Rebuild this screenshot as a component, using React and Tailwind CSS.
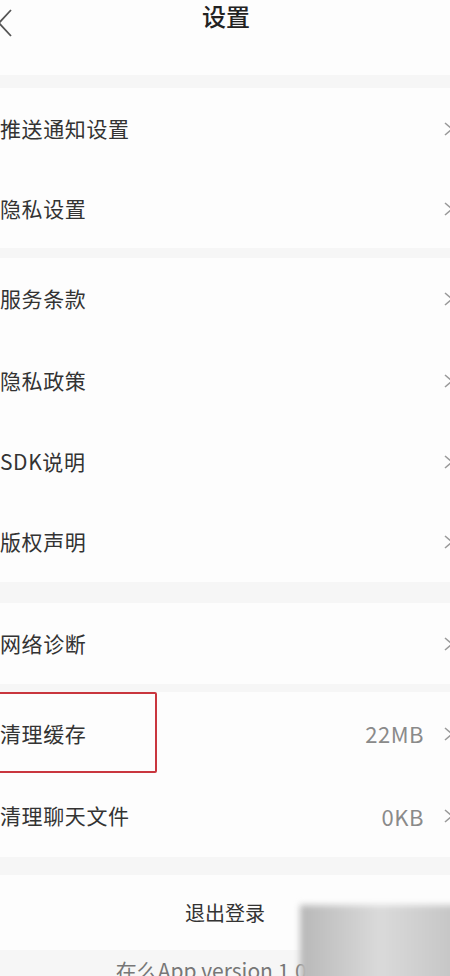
import React from 'react';

const font = { fontFamily: '"Noto Sans CJK SC", "Noto Sans", sans-serif' };

function Chevron() {
  return (
    <svg width="14" height="18" viewBox="0 0 14 18" className="shrink-0 -mr-[6px]">
      <polyline points="3,3 10,9 3,15" fill="none" stroke="#9a9a9a" strokeWidth="1.6" />
    </svg>
  );
}

function Row({ label, value, height = 'h-[81px]', highlight }) {
  return (
    <div className={`relative flex items-center justify-between bg-[#fdfdfd] ${height}`}>
      <span className="text-[21px] text-[#333] tracking-[0.6px]">{label}</span>
      <div className="flex items-center gap-[18px]">
        {value && <span className="text-[22px] text-[#8a8a8a] tracking-[0.5px]">{value}</span>}
        <Chevron />
      </div>
      {highlight && (
        <div className="absolute left-[-4px] top-0 w-[161px] h-[81px] border-2 border-[#c9363e] rounded-[2px]" />
      )}
    </div>
  );
}

export default function App() {
  return (
    <div className="relative w-[450px] h-[976px] overflow-hidden bg-[#f6f6f6]" style={font}>
      {/* header */}
      <div className="relative h-[75px] bg-[#fdfdfd]">
        <svg width="14" height="28" viewBox="0 0 14 28" className="absolute left-[-2px] top-[9px]">
          <polyline points="13,1 1,14 13,27" fill="none" stroke="#555" strokeWidth="1.8" />
        </svg>
        <div className="flex justify-center pt-[2px]">
          <span className="text-[24px] font-medium text-[#222] leading-[28px] pl-[2px]">设置</span>
        </div>
      </div>

      <div className="h-[13px]" />
      <Row label="推送通知设置" height="h-[81px]" />
      <Row label="隐私设置" height="h-[79px]" />

      <div className="h-[10px]" />
      <Row label="服务条款" height="h-[82px]" />
      <Row label="隐私政策" />
      <Row label="SDK说明" />
      <Row label="版权声明" height="h-[80px]" />

      <div className="h-[21px]" />
      <Row label="网络诊断" height="h-[81px]" />
      <div className="h-[8px]" />
      <Row label="清理缓存" value="22MB" height="h-[83px]" highlight />
      <Row label="清理聊天文件" value="0KB" height="h-[82px]" />

      <div className="h-[18px]" />
      <div className="flex items-center justify-center h-[75px] bg-[#fdfdfd]">
        <span className="text-[20px] text-[#333]">退出登录</span>
      </div>

      <div className="flex justify-center pt-[6px] pr-[10px]">
        <span className="text-[21px] leading-[28px] text-[#777]">在么App version 1.0.0</span>
      </div>

      {/* blurred watermark */}
      <div className="absolute left-[300px] top-[905px] w-[160px] h-[80px] bg-gradient-to-r from-[#b8b8b8] via-[#dadada] to-[#c4c4c4] blur-[3px]" />
    </div>
  );
}
